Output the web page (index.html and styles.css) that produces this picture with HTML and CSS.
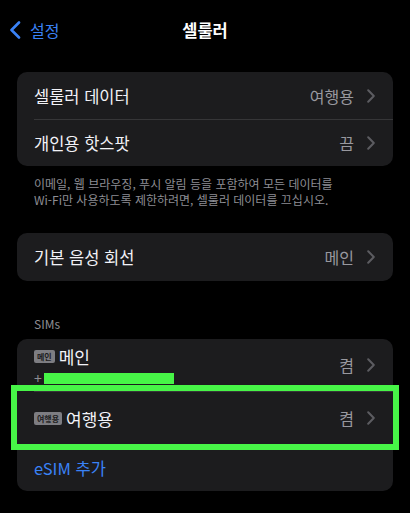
FILE: index.html
```html
<!DOCTYPE html>
<html lang="ko">
<head>
    <meta charset="UTF-8">
    <meta name="viewport" content="width=device-width, initial-scale=1.0">
    <title>셀룰러</title>
    <link rel="stylesheet" href="styles.css">
</head>
<body>
    <div class="nav">
        <a class="back" href="#">
            <svg width="12" height="18" viewBox="0 0 12 18"><path d="M10 1.5L2.5 9 10 16.5" fill="none" stroke="#3a82f6" stroke-width="2.6" stroke-linecap="round" stroke-linejoin="round"/></svg>
            <span>설정</span>
        </a>
        <div class="title">셀룰러</div>
        <div></div>
    </div>

    <div class="content">
        <div class="card">
            <div class="row">
                <div class="row-main">
                    <span class="label">셀룰러 데이터</span>
                    <span class="value">여행용</span>
                    <svg class="chev" width="8" height="14" viewBox="0 0 8 14"><path d="M1.2 1.2L6.8 7 1.2 12.8" fill="none" stroke="#5c5c61" stroke-width="2" stroke-linecap="round" stroke-linejoin="round"/></svg>
                </div>
            </div>
            <div class="row">
                <div class="row-main">
                    <span class="label">개인용 핫스팟</span>
                    <span class="value">끔</span>
                    <svg class="chev" width="8" height="14" viewBox="0 0 8 14"><path d="M1.2 1.2L6.8 7 1.2 12.8" fill="none" stroke="#5c5c61" stroke-width="2" stroke-linecap="round" stroke-linejoin="round"/></svg>
                </div>
            </div>
        </div>
        <p class="note">이메일, 웹 브라우징, 푸시 알림 등을 포함하여 모든 데이터를<br>Wi-Fi만 사용하도록 제한하려면, 셀룰러 데이터를 끄십시오.</p>

        <div class="card card-voice">
            <div class="row">
                <div class="row-main">
                    <span class="label">기본 음성 회선</span>
                    <span class="value">메인</span>
                    <svg class="chev" width="8" height="14" viewBox="0 0 8 14"><path d="M1.2 1.2L6.8 7 1.2 12.8" fill="none" stroke="#5c5c61" stroke-width="2" stroke-linecap="round" stroke-linejoin="round"/></svg>
                </div>
            </div>
        </div>

        <div class="section-title">SIMs</div>
        <div class="card">
            <div class="row row-sim">
                <div class="row-main">
                    <div class="sim-info">
                        <div class="sim-name"><span class="badge">메인</span>메인</div>
                        <div class="sim-number">+<span class="redact"></span></div>
                    </div>
                    <span class="value">켬</span>
                    <svg class="chev" width="8" height="14" viewBox="0 0 8 14"><path d="M1.2 1.2L6.8 7 1.2 12.8" fill="none" stroke="#5c5c61" stroke-width="2" stroke-linecap="round" stroke-linejoin="round"/></svg>
                </div>
            </div>
            <div class="row row-travel">
                <div class="row-main">
                    <div class="sim-name"><span class="badge">여행용</span>여행용</div>
                    <span class="value">켬</span>
                    <svg class="chev" width="8" height="14" viewBox="0 0 8 14"><path d="M1.2 1.2L6.8 7 1.2 12.8" fill="none" stroke="#5c5c61" stroke-width="2" stroke-linecap="round" stroke-linejoin="round"/></svg>
                </div>
            </div>
            <div class="row row-add">
                <div class="row-main">
                    <span class="link">eSIM 추가</span>
                </div>
            </div>
        </div>
    </div>
</body>
</html>
```

FILE: styles.css
```css
/* General Styles */
body {
    font-family: 'Noto Sans CJK KR', 'Noto Sans', sans-serif;
    background: #000;
    color: #f2f2f7;
    margin: 0;
    padding: 0;
}

.nav {
    height: 60px;
    display: grid;
    grid-template-columns: 1fr auto 1fr;
    align-items: center;
}

.back {
    display: flex;
    align-items: center;
    gap: 9px;
    padding-left: 9px;
    color: #3a82f6;
    text-decoration: none;
    font-size: 16px;
}

.title {
    font-size: 16.5px;
    font-weight: 600;
    color: #fff;
}

.content {
    padding: 12px 17px;
}

.card {
    background: #1c1c1e;
    border-radius: 10px;
}

.row {
    padding-left: 17px;
}

.row-main {
    display: flex;
    align-items: center;
    height: 47px;
    padding-right: 18px;
    box-sizing: border-box;
}

.row + .row .row-main {
    border-top: 1px solid #363638;
}

.label {
    flex: 1;
    font-size: 16.5px;
    color: #f2f2f7;
}

.value {
    font-size: 16px;
    color: #98989e;
    margin-left: auto;
    margin-right: 13px;
}

.chev {
    display: block;
}

.note {
    margin: 10px 0 0;
    padding: 0 17px;
    font-size: 12px;
    line-height: 16px;
    color: #8d8d93;
}

.card-voice {
    margin-top: 25px;
}

.card-voice .row-main {
    height: 48px;
}

.section-title {
    margin-top: 35px;
    margin-bottom: 7px;
    padding-left: 17px;
    font-size: 12px;
    line-height: 16px;
    color: #8d8d93;
}

.row-sim .row-main {
    height: 52px;
    align-items: flex-start;
}

.row-sim .value,
.row-sim .chev {
    align-self: center;
}

.sim-info {
    padding-top: 5px;
}

.sim-name {
    display: flex;
    align-items: center;
    font-size: 17px;
    color: #f2f2f7;
}

.badge {
    background: #7d7d82;
    color: #1c1c1e;
    font-size: 8px;
    font-weight: 700;
    line-height: 13px;
    padding: 0 3px;
    border-radius: 2px;
    margin-right: 4px;
}

.sim-number {
    display: flex;
    align-items: center;
    font-size: 14px;
    line-height: 18px;
    color: #8d8d93;
}

.redact {
    display: inline-block;
    width: 130px;
    height: 11px;
    margin-left: 2px;
    background: #47f547;
}

.row-travel .row-main {
    height: 53px;
}

.row-travel {
    outline: 6px solid #47f547;
    position: relative;
}

.link {
    font-size: 16.5px;
    color: #3a82f6;
}
```
